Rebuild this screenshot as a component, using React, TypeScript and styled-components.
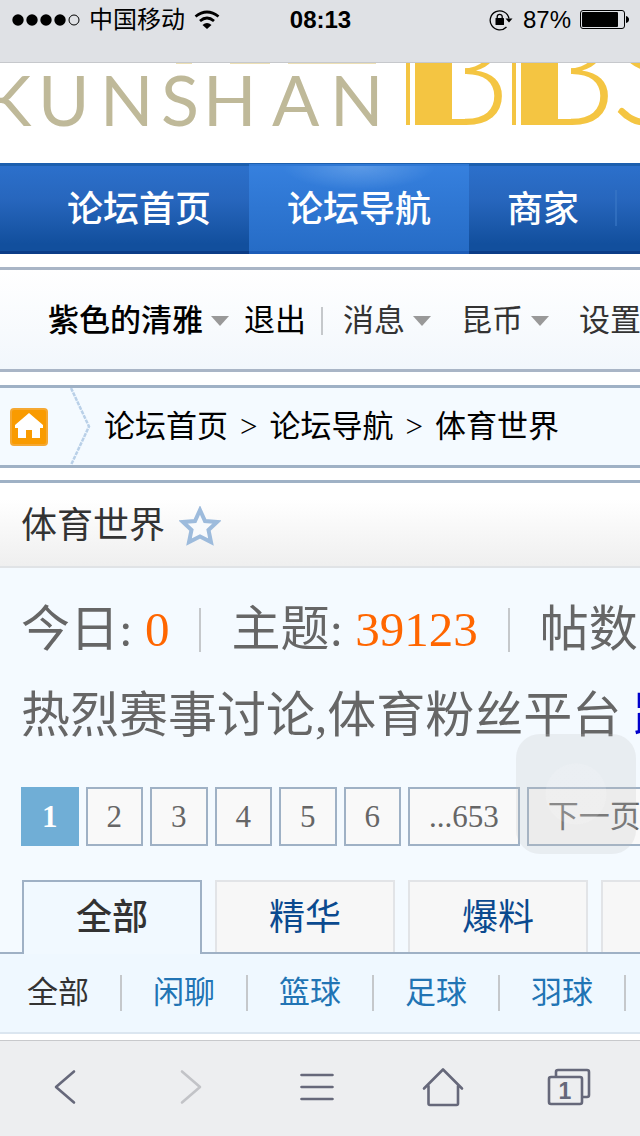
import React from "react";
import styled, { createGlobalStyle, css } from "styled-components";

const sans = `"Liberation Sans", "Noto Sans CJK SC", sans-serif`;
const serif = `"Liberation Serif", "Noto Sans CJK SC", serif`;
const line = "#9fb1c5";

const GlobalStyle = createGlobalStyle`
  * { box-sizing: border-box; }
  html, body { margin: 0; background: #fff; overflow-x: hidden; }
  body { font-family: ${serif}; color: #333; }
  a { color: inherit; text-decoration: none; }
  button { font: inherit; color: inherit; background: none; border: 0; padding: 0; }
  svg { display: block; flex: none; }
`;

const Page = styled.div`
  min-height: 100vh;
  display: flex;
  flex-direction: column;
  overflow: hidden;
  white-space: nowrap;
`;

const StatusBar = styled.header`
  display: grid;
  grid-template-columns: 1fr auto 1fr;
  align-items: center;
  padding: 0 11px 22px 12px;
  background: #dfe1e5;
  border-bottom: 1px solid #c6c8cc;
  font: 24px/40px ${sans};
  color: #000;
`;

const StatusGroup = styled.div<{ $end?: boolean }>`
  display: flex;
  align-items: center;
  gap: ${(p) => (p.$end ? 9 : 9)}px;
  justify-content: ${(p) => (p.$end ? "flex-end" : "flex-start")};
`;

const Time = styled.time`
  font-weight: 700;
`;

const LogoBanner = styled.a`
  display: block;
  height: 100px;
  overflow: hidden;
`;

const Nav = styled.nav`
  display: flex;
  padding-left: 29px;
  background: linear-gradient(#2c70cb, #2766bd 40%, #124f9d 92%);
  border-top: 3px solid #1c5fae;
  border-bottom: 3px solid #0b3c87;
`;

const NavItem = styled.a<{ $active?: boolean }>`
  position: relative;
  flex: none;
  padding: 3px 38px 0;
  font-size: 36px;
  font-weight: 500;
  line-height: 82px;
  color: #fff;
  ${(p) =>
    p.$active
      ? css`
          background: radial-gradient(ellipse 76px 24px at 50% 0, #5c9ae6, transparent),
            linear-gradient(#3680de, #266cc6);
          box-shadow: 0 -2px #2f78d4, 0 3px #1c5cb8;
        `
      : css`
          &::after {
            content: "";
            position: absolute;
            right: 0;
            top: 24px;
            width: 2px;
            height: 36px;
            background: #3b78c6;
            opacity: 0.6;
          }
          &:first-child::after { display: none; }
        `}
`;

const UserBar = styled.nav`
  display: flex;
  align-items: center;
  gap: 15px;
  margin-top: 13px;
  padding: 3px 0 0 48px;
  border-top: 3px solid #a9b5c6;
  border-bottom: 3px solid #a9b5c6;
  background: linear-gradient(#fff, #f2f7fc);
  font-size: 31px;
  line-height: 96px;
`;

const UserLink = styled.a<{ $strong?: boolean; $dark?: boolean; $wide?: boolean }>`
  flex: none;
  display: flex;
  align-items: center;
  gap: 8px;
  margin-right: ${(p) => (p.$wide ? 15 : 0)}px;
  color: ${(p) => (p.$dark ? "#000" : "#333")};
  font-weight: ${(p) => (p.$strong ? 500 : 400)};
`;

const Divider = styled.span<{ $size?: number }>`
  flex: none;
  width: 2px;
  height: ${(p) => p.$size ?? 28}px;
  background: #c5c8cb;
`;

const UserDivider = styled(Divider)`
  margin-right: 5px;
`;

const Breadcrumb = styled.nav`
  display: flex;
  align-items: center;
  gap: 12px;
  margin-top: 13px;
  padding-left: 10px;
  border-top: 3px solid ${line};
  border-bottom: 3px solid ${line};
  background: #f4faff;
  font-size: 31px;
  line-height: 77px;
  color: #000;
`;

const HomeLink = styled.a`
  display: flex;
  align-items: center;
  gap: 22px;
`;

const TitleBar = styled.header`
  display: flex;
  align-items: center;
  gap: 14px;
  margin-top: 12px;
  padding: 3px 0 0 21px;
  border-top: 3px solid ${line};
  border-bottom: 2px solid #e0e3e6;
  background: linear-gradient(#fff 20%, #efefef);
`;

const Title = styled.h1`
  margin: 0;
  font-size: 36px;
  font-weight: 400;
  line-height: 80px;
`;

const Board = styled.section`
  background: #f4faff;
  padding-top: 20px;
`;

const Stats = styled.div`
  display: flex;
  align-items: center;
  gap: 30px;
  padding-left: 21px;
  font-size: 49px;
  line-height: 84px;
  color: #666;
`;

const Figure = styled.span`
  flex: none;
  b { font-weight: 400; color: #ff6600; }
`;

const Notice = styled.p`
  margin: 0;
  padding: 2px 0 0 21px;
  font-size: 49px;
  line-height: 84px;
  color: #666;
  a { color: #0000cc; }
`;

const Pager = styled.nav`
  display: flex;
  gap: 7px;
  padding: 29px 0 34px 21px;
`;

const PageLink = styled.a<{ $current?: boolean }>`
  flex: none;
  padding: 0 19px;
  border: 2px solid ${(p) => (p.$current ? "#70aed6" : line)};
  background: ${(p) => (p.$current ? "#70aed6" : "#f9f9f9")};
  color: ${(p) => (p.$current ? "#fff" : "#666")};
  font-size: 31px;
  font-weight: ${(p) => (p.$current ? 700 : 400)};
  line-height: 55px;
`;

const Tabs = styled.nav`
  display: flex;
  gap: 13px;
  padding-left: 22px;
  border-bottom: 2px solid ${line};
`;

const Tab = styled.a<{ $active?: boolean }>`
  flex: none;
  min-width: 180px;
  padding: 2px 24px 0;
  text-align: center;
  font-size: 36px;
  line-height: 68px;
  border: 2px solid ${(p) => (p.$active ? line : "#e2e4e7")};
  border-bottom: 0;
  background: ${(p) => (p.$active ? "#f1f9ff" : "#f7f7f7")};
  color: ${(p) => (p.$active ? "#333" : "#0b4a8f")};
  font-weight: ${(p) => (p.$active ? 500 : 400)};
  ${(p) => p.$active && css`margin-bottom: -2px;`}
`;

const Topics = styled.nav`
  display: flex;
  align-items: center;
  gap: 31px;
  padding-left: 27px;
  background: #eff8ff;
  border-bottom: 2px solid #dbe6f0;
  font-size: 31px;
  line-height: 78px;
`;

const Topic = styled.a<{ $active?: boolean }>`
  flex: none;
  color: ${(p) => (p.$active ? "#333" : "#2174b4")};
`;

const ToolBar = styled.footer`
  display: grid;
  grid-template-columns: repeat(5, 1fr);
  align-items: center;
  margin-top: auto;
  min-height: 96px;
  padding: 0 8px 4px 2px;
  background: #edeef0;
  border-top: 1px solid #c8c9cc;
`;

const ToolButton = styled.button`
  display: flex;
  justify-content: center;
  color: #66687a;
  &:disabled { color: #c2c3c7; }
`;

const AssistiveButton = styled.button`
  position: fixed;
  top: 734px;
  right: 4px;
  width: 120px;
  height: 120px;
  border-radius: 24px;
  background: radial-gradient(circle, rgba(255, 255, 255, 0.12) 30px, transparent 31px),
    rgba(190, 190, 190, 0.22);
`;

const Caret = () => (
  <svg width="18" height="10" viewBox="0 0 18 10" aria-hidden="true">
    <path d="M0 0H18L9 10Z" fill="#999" />
  </svg>
);

const SignalIcon = () => (
  <svg width="68" height="14" viewBox="0 0 68 14" aria-label="signal">
    {[6, 20, 34, 48].map((x) => (
      <circle key={x} cx={x} cy="7" r="5.7" />
    ))}
    <circle cx="62" cy="7" r="5" fill="none" stroke="#000" />
  </svg>
);

const WifiIcon = () => (
  <svg width="26" height="20" viewBox="0 0 26 20" aria-label="wifi">
    <path d="M1.500 6.500Q13-2.500 24.500 6.500M6 11Q13 5 20 11" fill="none" stroke="#000" strokeWidth="2.800" />
    <path d="M8.500 15Q13 11 17.500 15L13 19Z" />
  </svg>
);

const RotationLockIcon = () => (
  <svg width="25" height="22" viewBox="0 0 25 22" aria-label="rotation lock">
    <path d="M17.500 18A9.500 9.500 0 1 1 20 9.500" fill="none" stroke="#000" strokeWidth="1.300" />
    <path d="M16.500 9.500H23.500L20 13.500Z" />
    <rect x="6.500" y="9" width="8.500" height="7" rx="0.500" />
    <path d="M8.200 9.500V7.800a2.500 2.500 0 0 1 5 0V9.500" fill="none" stroke="#000" strokeWidth="1.300" />
  </svg>
);

const BatteryIcon = () => (
  <svg width="49" height="20" viewBox="0 0 49 20" aria-label="battery">
    <rect x="0.500" y="0.500" width="44" height="18" rx="2.500" fill="none" stroke="#000" />
    <rect x="2" y="2" width="36" height="15" rx="1" />
    <path d="M46 6q3 1 3 3.500t-3 3.500z" />
  </svg>
);

const Logo = () => (
  <svg width="720" height="100" viewBox="0 0 720 100" role="img" aria-label="Kunshan BBS">
    <g fill="#ecdfb4">
      <rect x="176" y="0" width="16" height="1" />
      <rect x="230" y="0" width="40" height="1" />
      <rect x="288" y="0" width="88" height="1" />
    </g>
    <text x="-15 38 100 161 203 272 330" y="63" fontFamily="Lato" fontSize="70" fill="#bfb999">
      KUNSHAN
    </text>
    <text x="416 522 611" y="62" fontFamily="Lato" fontWeight="300" fontSize="150" fill="#f4c542">
      BBS
    </text>
    {[406, 512].map((x) => (
      <g key={x} fill="#f4c542">
        <rect x={x + 46} y="0" width="13" height="56" fill="#fff" />
        <rect x={x} y="0" width="4" height="62" />
        <rect x={x + 9} y="0" width="37" height="62" />
      </g>
    ))}
  </svg>
);

const HomeBadge = () => (
  <svg width="38" height="38" viewBox="0 0 38 38" aria-hidden="true">
    <rect width="38" height="38" rx="4" fill="#f5a832" />
    <rect x="2" y="2" width="34" height="34" rx="2" fill="#f99b00" />
    <path d="M19 5L33 17V20H30V30H22V22H16V30H8V20H5V17Z" fill="#fff" />
  </svg>
);

const CrumbArrow = () => (
  <svg width="22" height="77" viewBox="0 0 22 77" aria-hidden="true">
    <path d="M1 0L19 38.500L1 77" fill="none" stroke="#b9d0e8" strokeWidth="2.500" strokeDasharray="4 1" />
  </svg>
);

const StarIcon = () => (
  <svg width="42" height="40" viewBox="0 0 42 40" aria-hidden="true">
    <path
      d="M21 4L26 15L38 16L29.500 24L32 36L21 30.500L10 36L12.500 24L4 16L16 15Z"
      fill="#f8fafc"
      stroke="#9dbbdc"
      strokeWidth="4"
    />
  </svg>
);

const lineIcon = { fill: "none", stroke: "currentColor", strokeWidth: 2.6, strokeLinecap: "round", strokeLinejoin: "round" } as const;

const BackIcon = () => (
  <svg width="22" height="36" viewBox="0 0 22 36" {...lineIcon}>
    <path d="M20 2.500L2 18L20 33.500" />
  </svg>
);

const ForwardIcon = () => (
  <svg width="22" height="36" viewBox="0 0 22 36" {...lineIcon}>
    <path d="M2 2.500L20 18L2 33.500" />
  </svg>
);

const MenuIcon = () => (
  <svg width="34" height="30" viewBox="0 0 34 30" {...lineIcon}>
    <path d="M1.500 3H32.500M1.500 15H32.500M1.500 27H32.500" />
  </svg>
);

const HouseIcon = () => (
  <svg width="42" height="40" viewBox="0 0 42 40" {...lineIcon}>
    <path d="M2 21.500L21 2.500L40 21.500M6.500 19V36.500Q6.500 38 8 38H34.500Q36 38 36 36.500V19" />
  </svg>
);

const WindowsIcon = () => (
  <svg width="44" height="38" viewBox="0 0 44 38" {...lineIcon}>
    <rect x="2" y="9" width="33" height="27" rx="2" />
    <path d="M9 8V4Q9 2 11 2H40Q42 2 42 4V27Q42 29 40 29H36" />
    <text x="18" y="31" textAnchor="middle" fontFamily={sans} fontSize="23" fontWeight="700" fill="#66687a" stroke="none">
      1
    </text>
  </svg>
);

const topics = ["全部", "闲聊", "篮球", "足球", "羽球"];

export default function App() {
  return (
    <Page>
      <GlobalStyle />
      <StatusBar>
        <StatusGroup>
          <SignalIcon />
          <span>中国移动</span>
          <WifiIcon />
        </StatusGroup>
        <Time>08:13</Time>
        <StatusGroup $end>
          <RotationLockIcon />
          <span>87%</span>
          <BatteryIcon />
        </StatusGroup>
      </StatusBar>

      <LogoBanner href="#">
        <Logo />
      </LogoBanner>

      <Nav>
        <NavItem href="#">论坛首页</NavItem>
        <NavItem href="#" $active>论坛导航</NavItem>
        <NavItem href="#">商家</NavItem>
      </Nav>

      <UserBar>
        <UserLink href="#" $strong $dark>紫色的清雅<Caret /></UserLink>
        <UserLink href="#" $dark>退出</UserLink>
        <UserDivider />
        <UserLink href="#" $wide>消息<Caret /></UserLink>
        <UserLink href="#" $wide>昆币<Caret /></UserLink>
        <UserLink href="#">设置</UserLink>
      </UserBar>

      <Breadcrumb>
        <HomeLink href="#" aria-label="首页">
          <HomeBadge />
          <CrumbArrow />
        </HomeLink>
        <a href="#">论坛首页</a>
        <span>&gt;</span>
        <a href="#">论坛导航</a>
        <span>&gt;</span>
        <a href="#">体育世界</a>
      </Breadcrumb>

      <TitleBar>
        <Title>体育世界</Title>
        <button aria-label="收藏"><StarIcon /></button>
      </TitleBar>

      <Board>
        <Stats>
          <Figure>今日: <b>0</b></Figure>
          <Divider $size={44} />
          <Figure>主题: <b>39123</b></Figure>
          <Divider $size={44} />
          <Figure>帖数</Figure>
        </Stats>
        <Notice>
          热烈赛事讨论,体育粉丝平台 <a href="#">跟</a>
        </Notice>
        <Pager>
          {["1", "2", "3", "4", "5", "6", "...653", "下一页"].map((label) => (
            <PageLink key={label} href="#" $current={label === "1"}>{label}</PageLink>
          ))}
        </Pager>
        <Tabs>
          <Tab href="#" $active>全部</Tab>
          <Tab href="#">精华</Tab>
          <Tab href="#">爆料</Tab>
          <Tab href="#" aria-label="更多" />
        </Tabs>
        <Topics>
          {topics.map((name, i) => (
            <React.Fragment key={name}>
              <Topic href="#" $active={i === 0}>{name}</Topic>
              <Divider $size={36} />
            </React.Fragment>
          ))}
        </Topics>
      </Board>

      <ToolBar>
        <ToolButton aria-label="后退"><BackIcon /></ToolButton>
        <ToolButton aria-label="前进" disabled><ForwardIcon /></ToolButton>
        <ToolButton aria-label="菜单"><MenuIcon /></ToolButton>
        <ToolButton aria-label="主页"><HouseIcon /></ToolButton>
        <ToolButton aria-label="窗口"><WindowsIcon /></ToolButton>
      </ToolBar>
      <AssistiveButton aria-label="辅助触控" />
    </Page>
  );
}
